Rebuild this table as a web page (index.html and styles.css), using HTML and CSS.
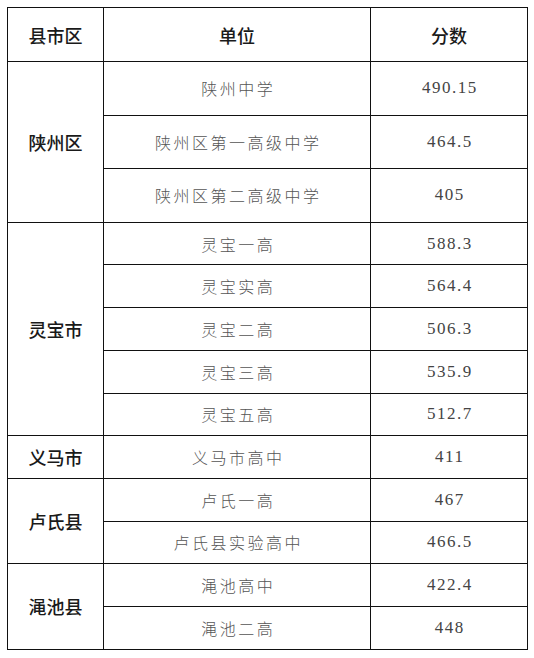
FILE: index.html
```html
<!DOCTYPE html>
<html lang="zh">
<head>
<meta charset="utf-8">
<link rel="stylesheet" href="styles.css">
</head>
<body>
<table class="score">
  <colgroup><col class="c1"><col class="c2"><col class="c3"></colgroup>
  <tr class="head"><th>县市区</th><th>单位</th><th>分数</th></tr>
  <tr class="tall"><td class="area" rowspan="3">陕州区</td><td class="unit">陕州中学</td><td class="num">490.15</td></tr>
  <tr class="tall"><td class="unit">陕州区第一高级中学</td><td class="num">464.5</td></tr>
  <tr class="tall"><td class="unit">陕州区第二高级中学</td><td class="num">405</td></tr>
  <tr class="row"><td class="area" rowspan="5">灵宝市</td><td class="unit">灵宝一高</td><td class="num">588.3</td></tr>
  <tr class="row"><td class="unit">灵宝实高</td><td class="num">564.4</td></tr>
  <tr class="row"><td class="unit">灵宝二高</td><td class="num">506.3</td></tr>
  <tr class="row"><td class="unit">灵宝三高</td><td class="num">535.9</td></tr>
  <tr class="row"><td class="unit">灵宝五高</td><td class="num">512.7</td></tr>
  <tr class="row"><td class="area">义马市</td><td class="unit">义马市高中</td><td class="num">411</td></tr>
  <tr class="row"><td class="area" rowspan="2">卢氏县</td><td class="unit">卢氏一高</td><td class="num">467</td></tr>
  <tr class="row"><td class="unit">卢氏县实验高中</td><td class="num">466.5</td></tr>
  <tr class="row"><td class="area" rowspan="2">渑池县</td><td class="unit">渑池高中</td><td class="num">422.4</td></tr>
  <tr class="row"><td class="unit">渑池二高</td><td class="num">448</td></tr>
</table>
</body>
</html>
```

FILE: styles.css
```css
html, body {
  margin: 0;
  background: #ffffff;
}
body {
  padding: 7px 0 0 7px;
}
.score {
  border-collapse: collapse;
  table-layout: fixed;
  width: 520px;
  font-family: "Noto Sans CJK SC", "Noto Sans", sans-serif;
}
.c1 { width: 96px; }
.c2 { width: 267px; }
.c3 { width: 157px; }
.score th, .score td {
  border: 1px solid #111;
  padding: 0;
  text-align: center;
  vertical-align: middle;
}
.head { height: 54px; }
.tall { height: 53.6px; }
.row { height: 42.7px; }
.score th {
  font-size: 18px;
  font-weight: 500;
  color: #1a1a1a;
}
.area {
  font-size: 18px;
  font-weight: 500;
  color: #1a1a1a;
}
.unit {
  font-size: 16px;
  font-weight: 300;
  color: #555;
  letter-spacing: 2.5px;
  text-indent: 2.5px;
}
.num {
  font-family: "Liberation Serif", "DejaVu Serif", serif;
  font-size: 17px;
  color: #444;
  letter-spacing: 1.5px;
  text-indent: 1.5px;
}
```
